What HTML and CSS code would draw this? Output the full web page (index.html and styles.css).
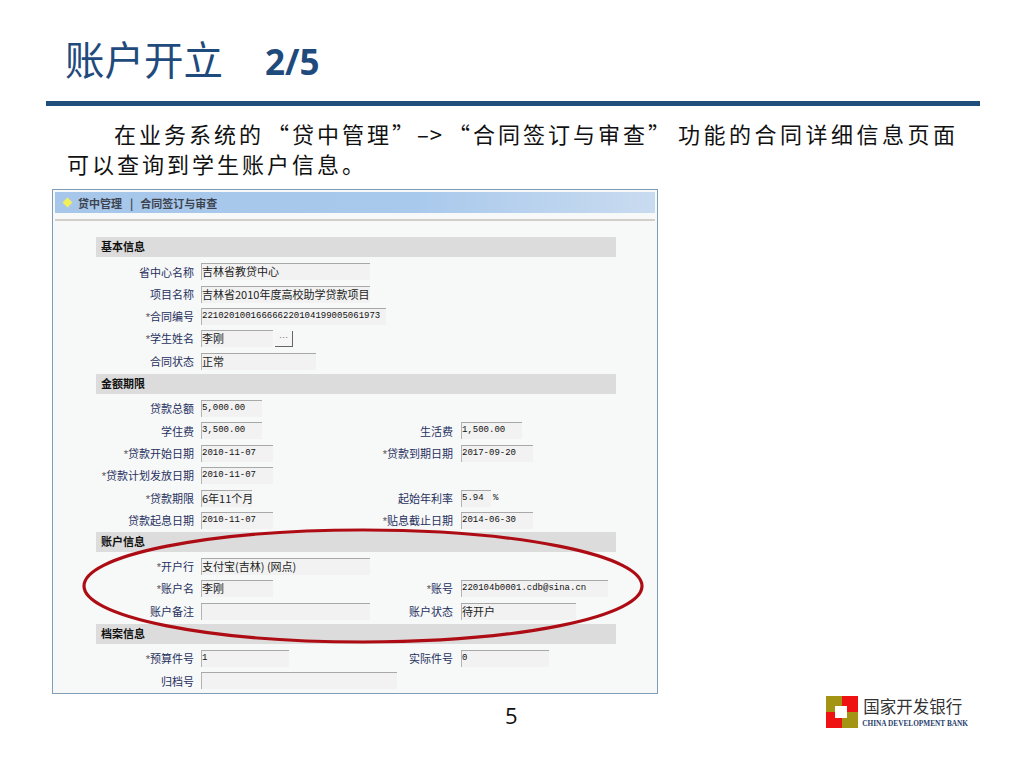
FILE: index.html
```html
<!DOCTYPE html>
<html lang="zh-CN">
<head>
  <meta charset="UTF-8" />
  <title>账户开立 2/5</title>
  <link rel="stylesheet" href="styles.css">
</head>
<body>

<div class="slide">
  <h1 class="title">账户开立<span class="title-num">2/5</span></h1>
  <div class="rule"></div>
  <p class="intro">
    <span class="intro-first">在业务系统的</span><span class="gap-sm">“贷中管理”</span><span class="arrow">–&gt;</span>“合同签订与审查”<span class="gap">功能的合同详细信息页面</span><br>可以查询到学生账户信息。
  </p>

  <div class="shot">
    <div class="shot-head">
      <span class="shot-dot"></span>
      <span>贷中管理</span><span class="shot-sep">|</span><span>合同签订与审查</span>
    </div>
    <div class="shot-line"></div>

    <div class="form">
      <div class="bar">基本信息</div>
      <div class="rows tail">
        <div class="lbl">省中心名称</div>
        <div class="val wide w169">吉林省教贷中心</div>
        <div class="lbl">项目名称</div>
        <div class="val wide w169">吉林省2010年度高校助学贷款项目</div>
        <div class="lbl"><i>*</i>合同编号</div>
        <div class="val wide w185 mono">221020100166666220104199005061973</div>
        <div class="lbl"><i>*</i>学生姓名</div>
        <div class="wide pick"><div class="val w72">李刚</div><div class="pick-btn">…</div></div>
        <div class="lbl">合同状态</div>
        <div class="val wide w115">正常</div>
      </div>

      <div class="bar">金额期限</div>
      <div class="rows">
        <div class="lbl">贷款总额</div>
        <div class="val wide w61 mono">5,000.00</div>
        <div class="lbl">学住费</div>
        <div class="val w61 mono">3,500.00</div>
        <div class="lbl">生活费</div>
        <div class="val w61 mono col4">1,500.00</div>
        <div class="lbl"><i>*</i>贷款开始日期</div>
        <div class="val w72 mono">2010-11-07</div>
        <div class="lbl"><i>*</i>贷款到期日期</div>
        <div class="val w72 mono col4">2017-09-20</div>
        <div class="lbl"><i>*</i>贷款计划发放日期</div>
        <div class="val wide w72 mono">2010-11-07</div>
        <div class="lbl"><i>*</i>贷款期限</div>
        <div class="val w51">6年11个月</div>
        <div class="lbl">起始年利率</div>
        <div class="col4 rate"><div class="val w30 mono">5.94</div><span class="pct">%</span></div>
        <div class="lbl">贷款起息日期</div>
        <div class="val w72 mono">2010-11-07</div>
        <div class="lbl"><i>*</i>贴息截止日期</div>
        <div class="val w72 mono col4">2014-06-30</div>
      </div>

      <div class="bar">账户信息</div>
      <div class="rows tail">
        <div class="lbl"><i>*</i>开户行</div>
        <div class="val wide w169">支付宝(吉林) (网点)</div>
        <div class="lbl"><i>*</i>账户名</div>
        <div class="val w72">李刚</div>
        <div class="lbl"><i>*</i>账号</div>
        <div class="val w147 mono col4">220104b0001.cdb@sina.cn</div>
        <div class="lbl">账户备注</div>
        <div class="val w169"></div>
        <div class="lbl">账户状态</div>
        <div class="val w115 col4">待开户</div>
      </div>

      <div class="bar">档案信息</div>
      <div class="rows">
        <div class="lbl"><i>*</i>预算件号</div>
        <div class="val w88 mono">1</div>
        <div class="lbl">实际件号</div>
        <div class="val w88 mono col4">0</div>
        <div class="lbl">归档号</div>
        <div class="val wide w196"></div>
      </div>
    </div>

    <svg class="ring" width="570" height="124" viewBox="0 0 570 124">
      <ellipse cx="285" cy="62" rx="279" ry="56" fill="none" stroke="#ad0c14" stroke-width="3.2"/>
    </svg>
  </div>

  <div class="foot">
    <div class="page-no">5</div>
    <div class="logo">
      <svg class="logo-mark" width="32" height="32" viewBox="0 0 32 32">
        <rect width="16" height="16" fill="#a39414"/>
        <rect x="16" width="16" height="16" fill="#ee1212"/>
        <rect y="16" width="16" height="16" fill="#ee1212"/>
        <rect x="16" y="16" width="16" height="16" fill="#a39414"/>
        <rect x="9" y="10" width="12" height="12" fill="#fff"/>
      </svg>
      <div class="logo-text">
        <div class="logo-cn">国家开发银行</div>
        <div class="logo-en">CHINA DEVELOPMENT BANK</div>
      </div>
    </div>
  </div>
</div>

</body>
</html>
```

FILE: styles.css
```css
body {
  margin: 0;
  background: #fff;
  font-family: "Noto Sans CJK SC", sans-serif;
}
.slide {
  width: 1024px;
  height: 768px;
  overflow: hidden;
  position: relative;
}
.title {
  margin: 0;
  padding: 33px 0 0 65px;
  height: 68px;
  font-size: 39.5px;
  line-height: 50px;
  font-weight: 400;
  color: #1f4a7c;
}
.title-num {
  margin-left: 42px;
  font-family: "Open Sans", sans-serif;
  font-size: 35px;
  font-weight: 700;
}
.rule {
  margin-left: 46px;
  width: 934px;
  height: 5px;
  background: #1f4e7e;
}
.intro {
  margin: 12px 0 0 67px;
  font-size: 22px;
  line-height: 30px;
  letter-spacing: 3px;
  color: #111;
  white-space: nowrap;
  height: 71px;
  font-weight: 400;
}
.intro-first {
  margin-left: 47px;
}
.gap-sm {
  margin-left: 3px;
}
.gap {
  margin-left: 5px;
  letter-spacing: 3.5px;
}
.arrow {
  letter-spacing: 1px;
  margin-right: 5px;
}

/* screenshot of the loan system */
.shot {
  position: relative;
  box-sizing: border-box;
  width: 606px;
  height: 505px;
  margin: 0 0 0 52px;
  padding: 2px;
  border: 1px solid #7f9db9;
  background: #f7f8f8;
}
.shot-head {
  display: flex;
  align-items: center;
  height: 21px;
  padding-left: 9px;
  font-size: 11px;
  font-weight: 700;
  color: #3d4450;
  background: linear-gradient(to right, #a6c6ea, #a9c9ec 60%, #c9dbf0);
}
.shot-dot {
  width: 7px;
  height: 7px;
  margin-right: 7px;
  background: #f2f05a;
  transform: rotate(45deg);
}
.shot-sep {
  margin: 0 7px 0 8px;
}
.shot-line {
  height: 2px;
  margin-top: 6px;
  background: #d2cfca;
}
.form {
  margin: 16px 0 0 41px;
  width: 520px;
}
.bar {
  height: 20px;
  line-height: 19px;
  padding-left: 5px;
  font-size: 11px;
  font-weight: 700;
  color: #111;
  background: #dcdcdc;
}
.rows {
  display: grid;
  grid-template-columns: 98px 170px 75px 155px;
  column-gap: 7px;
  grid-auto-rows: 22.4px;
  align-items: center;
  padding-top: 3.5px;
}
.tail {
  padding-bottom: 1.3px;
}
.lbl {
  font-size: 11px;
  line-height: 14px;
  text-align: right;
  color: #26305e;
  white-space: nowrap;
}
.lbl i {
  font-style: normal;
  font-family: "Liberation Sans", sans-serif;
  color: #555;
}
.val {
  box-sizing: border-box;
  height: 17px;
  font-size: 11px;
  line-height: 15px;
  color: #222;
  background: #f2f2f2;
  border-top: 1px solid #a8a8a8;
  border-left: 1px solid #b4b4b4;
  white-space: nowrap;
}
.mono {
  font-family: "Liberation Mono", "Noto Sans CJK SC", monospace;
  font-size: 9px;
  color: #111;
}
.wide {
  grid-column: 2 / span 3;
}
.col4 {
  grid-column: 4;
  margin-left: 1px;
}
.w30 { width: 30px; }
.w51 { width: 51px; }
.w61 { width: 61px; }
.w72 { width: 72px; }
.w88 { width: 88px; }
.w115 { width: 115px; }
.w147 { width: 147px; }
.w169 { width: 169px; }
.w185 { width: 185px; }
.w196 { width: 196px; }
.pick {
  display: flex;
  align-items: center;
}
.pick-btn {
  box-sizing: border-box;
  width: 18px;
  height: 16px;
  margin-left: 2px;
  font-size: 9px;
  line-height: 14px;
  text-align: center;
  color: #777;
  background: #f6f6f6;
  border-right: 1px solid #666;
  border-bottom: 1px solid #666;
}
.rate {
  display: flex;
  align-items: center;
}
.pct {
  margin-left: 2px;
  font-family: "Liberation Mono", monospace;
  font-size: 9px;
  color: #222;
}
.ring {
  position: absolute;
  left: 25px;
  top: 334px;
}

.foot {
  position: relative;
  display: flex;
  justify-content: flex-end;
  padding: 2px 56px 0 0;
}
.page-no {
  position: absolute;
  left: 505px;
  top: 6px;
  font-family: "Open Sans", sans-serif;
  font-size: 22px;
  line-height: 30px;
  color: #111;
}
.logo {
  display: flex;
  gap: 4px;
}
.logo-cn {
  margin-left: 1px;
  font-size: 16.5px;
  line-height: 20px;
  color: #333;
}
.logo-en {
  margin-top: 3px;
  font-family: "Liberation Serif", serif;
  font-size: 7.3px;
  line-height: 9px;
  font-weight: 700;
  color: #27406b;
  white-space: nowrap;
}
```
